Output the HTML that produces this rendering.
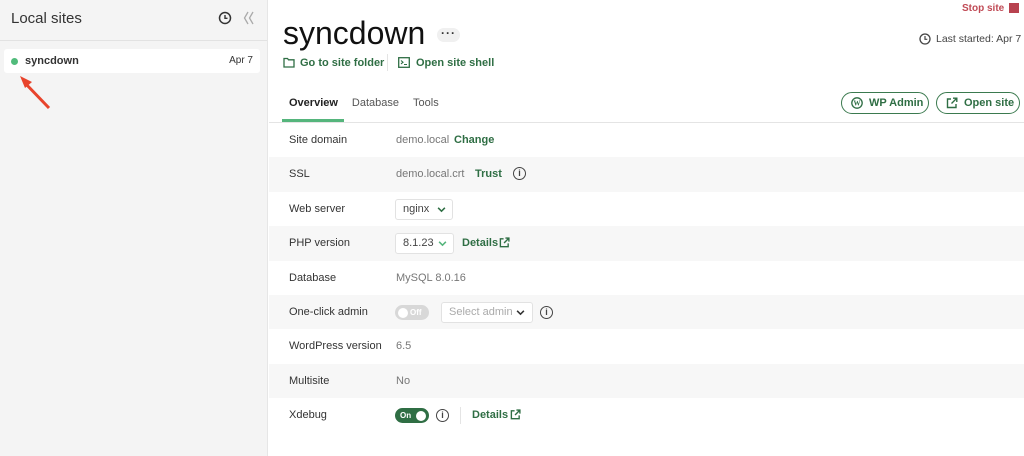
<!DOCTYPE html>
<html><head><meta charset="utf-8"><style>
*{box-sizing:border-box;margin:0;padding:0}
body{width:1024px;height:456px;overflow:hidden;font-family:"Liberation Sans",sans-serif;background:#fff;color:#262626;position:relative}
.side{position:absolute;left:0;top:0;width:268px;height:456px;background:#f4f4f4;border-right:1px solid #e6e6e6}
.shead{height:41px;border-bottom:1px solid #e2e2e2;position:relative}
.shead .t{position:absolute;left:11px;top:10px;font-size:15px;color:#333}
.item{position:absolute;left:4px;top:49px;width:256px;height:24px;background:#fff;border-radius:3px}
.item .dot{position:absolute;left:7px;top:9px;width:7px;height:7px;border-radius:50%;background:#51bb7b}
.item .n{position:absolute;left:21px;top:6px;font-size:11px;font-weight:bold;color:#333}
.item .d{position:absolute;right:7px;top:6px;font-size:10px;color:#333}
.abs{position:absolute}
.title{left:283px;top:15px;font-size:32px;color:#111}
.dots{left:437px;top:28px;width:23px;height:14px;background:#f0f0f0;border-radius:7px;font-size:12px;text-align:center;line-height:10px;color:#333;font-weight:bold;letter-spacing:1px}
.link{font-size:11px;font-weight:bold;color:#2f6e44}
.tabs{left:289px;top:97px;font-size:11px;color:#555}
.pill{height:22px;border:1.5px solid #3b7a4f;border-radius:11px;font-size:11px;font-weight:bold;color:#2f6e44;display:flex;align-items:center;padding-left:27px}
.row{position:absolute;left:269px;width:755px;height:34.4px}
.row.g{background:#f7f7f7}
.row .l{position:absolute;left:20px;top:11px;font-size:11px;color:#333}
.row .v{position:absolute;left:127px;top:11px;font-size:11px;color:#777}
.sel{position:absolute;height:21px;border:1px solid #e2e2e2;border-radius:3px;background:#fff;font-size:11px;color:#444;line-height:19px;padding-left:7px}
.chev{position:absolute;top:5px;width:9px;height:9px}
.info{position:absolute;width:13px;height:13px;border:1.3px solid #444;border-radius:50%;font-size:9px;font-weight:bold;text-align:center;line-height:11px;color:#444}
</style></head><body>
<div class="side">
 <div class="shead"><span class="t">Local sites</span>
  <svg class="abs" style="left:218px;top:11px" width="14" height="14" viewBox="0 0 14 14"><circle cx="7" cy="7" r="5.5" fill="none" stroke="#333" stroke-width="1.5"/><path d="M7 4v3.3h2.5" fill="none" stroke="#333" stroke-width="1.4"/></svg>
  <svg class="abs" style="left:243px;top:11px" width="12" height="14" viewBox="0 0 12 14"><path d="M5 1L1.5 7 5 13M10 1L6.5 7 10 13" fill="none" stroke="#aaa" stroke-width="1.3"/></svg>
 </div>
 <div class="item"><span class="dot"></span><span class="n">syncdown</span><span class="d">Apr 7</span></div>
 <svg class="abs" style="left:18px;top:74px" width="34" height="36" viewBox="0 0 34 36"><path d="M31 34L6 8" stroke="#e8442c" stroke-width="3"/><path d="M2 2L14 8 7 14Z" fill="#e8442c"/></svg>
</div>

<div class="abs title">syncdown</div>
<div class="abs dots">···</div>
<svg class="abs" style="left:283px;top:57px" width="12" height="11" viewBox="0 0 12 11"><path d="M1 1.5h3.5l1 1.3H11V10H1Z" fill="none" stroke="#2f6e44" stroke-width="1.3"/></svg>
<span class="abs link" style="left:300px;top:57px">Go to site folder</span>
<div class="abs" style="left:387px;top:54px;width:1px;height:17px;background:#e4e4e4"></div>
<svg class="abs" style="left:398px;top:57px" width="12" height="11" viewBox="0 0 12 11"><rect x="0.7" y="0.7" width="10.6" height="9.6" fill="none" stroke="#2f6e44" stroke-width="1.3"/><path d="M3 3.5l2 1.7-2 1.7M6 7.5h3" fill="none" stroke="#2f6e44" stroke-width="1.1"/></svg>
<span class="abs link" style="left:416px;top:57px">Open site shell</span>

<span class="abs" style="left:962px;top:3px;font-size:10px;font-weight:bold;color:#c04a55">Stop site</span>
<div class="abs" style="left:1009px;top:3px;width:10px;height:10px;background:#b8424f"></div>
<svg class="abs" style="left:919px;top:33px" width="12" height="12" viewBox="0 0 12 12"><circle cx="6" cy="6" r="5" fill="none" stroke="#444" stroke-width="1.3"/><path d="M6 3v3.3h2.3" fill="none" stroke="#444" stroke-width="1.2"/></svg>
<span class="abs" style="left:936px;top:33px;font-size:10.5px;color:#444">Last started: Apr 7</span>

<div class="abs tabs"><span style="color:#222;font-weight:bold">Overview</span><span style="margin-left:14px">Database</span><span style="margin-left:14px">Tools</span></div>
<div class="abs" style="left:282px;top:119px;width:62px;height:3px;background:#55b57c"></div>
<div class="abs" style="left:269px;top:122px;width:755px;height:1px;background:#e4e4e4"></div>

<div class="abs pill" style="left:841px;top:92px;width:88px">WP Admin</div>
<svg class="abs" style="left:851px;top:97px" width="12" height="12" viewBox="0 0 12 12"><circle cx="6" cy="6" r="5.2" fill="none" stroke="#2f6e44" stroke-width="1.3"/><text x="6" y="8.5" font-size="7" font-weight="bold" text-anchor="middle" fill="#2f6e44" font-family="Liberation Serif">W</text></svg>
<div class="abs pill" style="left:936px;top:92px;width:84px">Open site</div>
<svg class="abs" style="left:946px;top:97px" width="12" height="12" viewBox="0 0 12 12"><path d="M5 2H1.5v8.5H10V7M7 1.2h3.8V5M10.5 1.5L5.5 6.5" fill="none" stroke="#2f6e44" stroke-width="1.4"/></svg>

<div class="row" style="top:123px"><span class="l">Site domain</span><span class="v">demo.local</span><span class="abs link" style="left:185px;top:11px">Change</span></div>
<div class="row g" style="top:157.4px"><span class="l">SSL</span><span class="v">demo.local.crt</span><span class="abs link" style="left:206px;top:11px">Trust</span><span class="info" style="left:244px;top:10px">i</span></div>
<div class="row" style="top:191.8px"><span class="l">Web server</span><div class="sel" style="left:126px;top:7px;width:58px">nginx<svg class="chev" style="left:41px" viewBox="0 0 8 8"><path d="M1 2.5l3 3 3-3" fill="none" stroke="#2f6e44" stroke-width="1.4"/></svg></div></div>
<div class="row g" style="top:226.2px"><span class="l">PHP version</span><div class="sel" style="left:126px;top:7px;width:59px">8.1.23<svg class="chev" style="left:42px" viewBox="0 0 8 8"><path d="M1 2.5l3 3 3-3" fill="none" stroke="#55b57c" stroke-width="1.4"/></svg></div><span class="abs link" style="left:193px;top:11px">Details</span><svg class="abs" style="left:230px;top:11px" width="11" height="11" viewBox="0 0 12 12"><path d="M5 2H1.5v8.5H10V7M7 1.2h3.8V5M10.5 1.5L5.5 6.5" fill="none" stroke="#2f6e44" stroke-width="1.5"/></svg></div>
<div class="row" style="top:260.6px"><span class="l">Database</span><span class="v">MySQL 8.0.16</span></div>
<div class="row g" style="top:295px"><span class="l">One-click admin</span><div class="abs" style="left:126px;top:10px;width:34px;height:15px;border-radius:8px;background:#d8d8d8"><div class="abs" style="left:3px;top:2.5px;width:10px;height:10px;border-radius:50%;background:#fff"></div><span class="abs" style="left:15px;top:3px;font-size:8px;color:#fff;font-weight:bold">Off</span></div><div class="sel" style="left:172px;top:7px;width:92px;color:#aaa">Select admin<svg class="chev" style="left:74px" viewBox="0 0 8 8"><path d="M1 2.5l3 3 3-3" fill="none" stroke="#333" stroke-width="1.4"/></svg></div><span class="info" style="left:271px;top:11px">i</span></div>
<div class="row" style="top:329.4px"><span class="l">WordPress version</span><span class="v">6.5</span></div>
<div class="row g" style="top:363.8px"><span class="l">Multisite</span><span class="v">No</span></div>
<div class="row" style="top:398.2px"><span class="l">Xdebug</span><div class="abs" style="left:126px;top:10px;width:34px;height:15px;border-radius:8px;background:#2f6e44"><span class="abs" style="left:5px;top:3px;font-size:8px;color:#fff;font-weight:bold">On</span><div class="abs" style="left:21px;top:2.5px;width:10px;height:10px;border-radius:50%;background:#fff"></div></div><span class="info" style="left:167px;top:11px">i</span><div class="abs" style="left:191px;top:9px;width:1px;height:17px;background:#e4e4e4"></div><span class="abs link" style="left:203px;top:11px">Details</span><svg class="abs" style="left:241px;top:11px" width="11" height="11" viewBox="0 0 12 12"><path d="M5 2H1.5v8.5H10V7M7 1.2h3.8V5M10.5 1.5L5.5 6.5" fill="none" stroke="#2f6e44" stroke-width="1.5"/></svg></div>
</body></html>
